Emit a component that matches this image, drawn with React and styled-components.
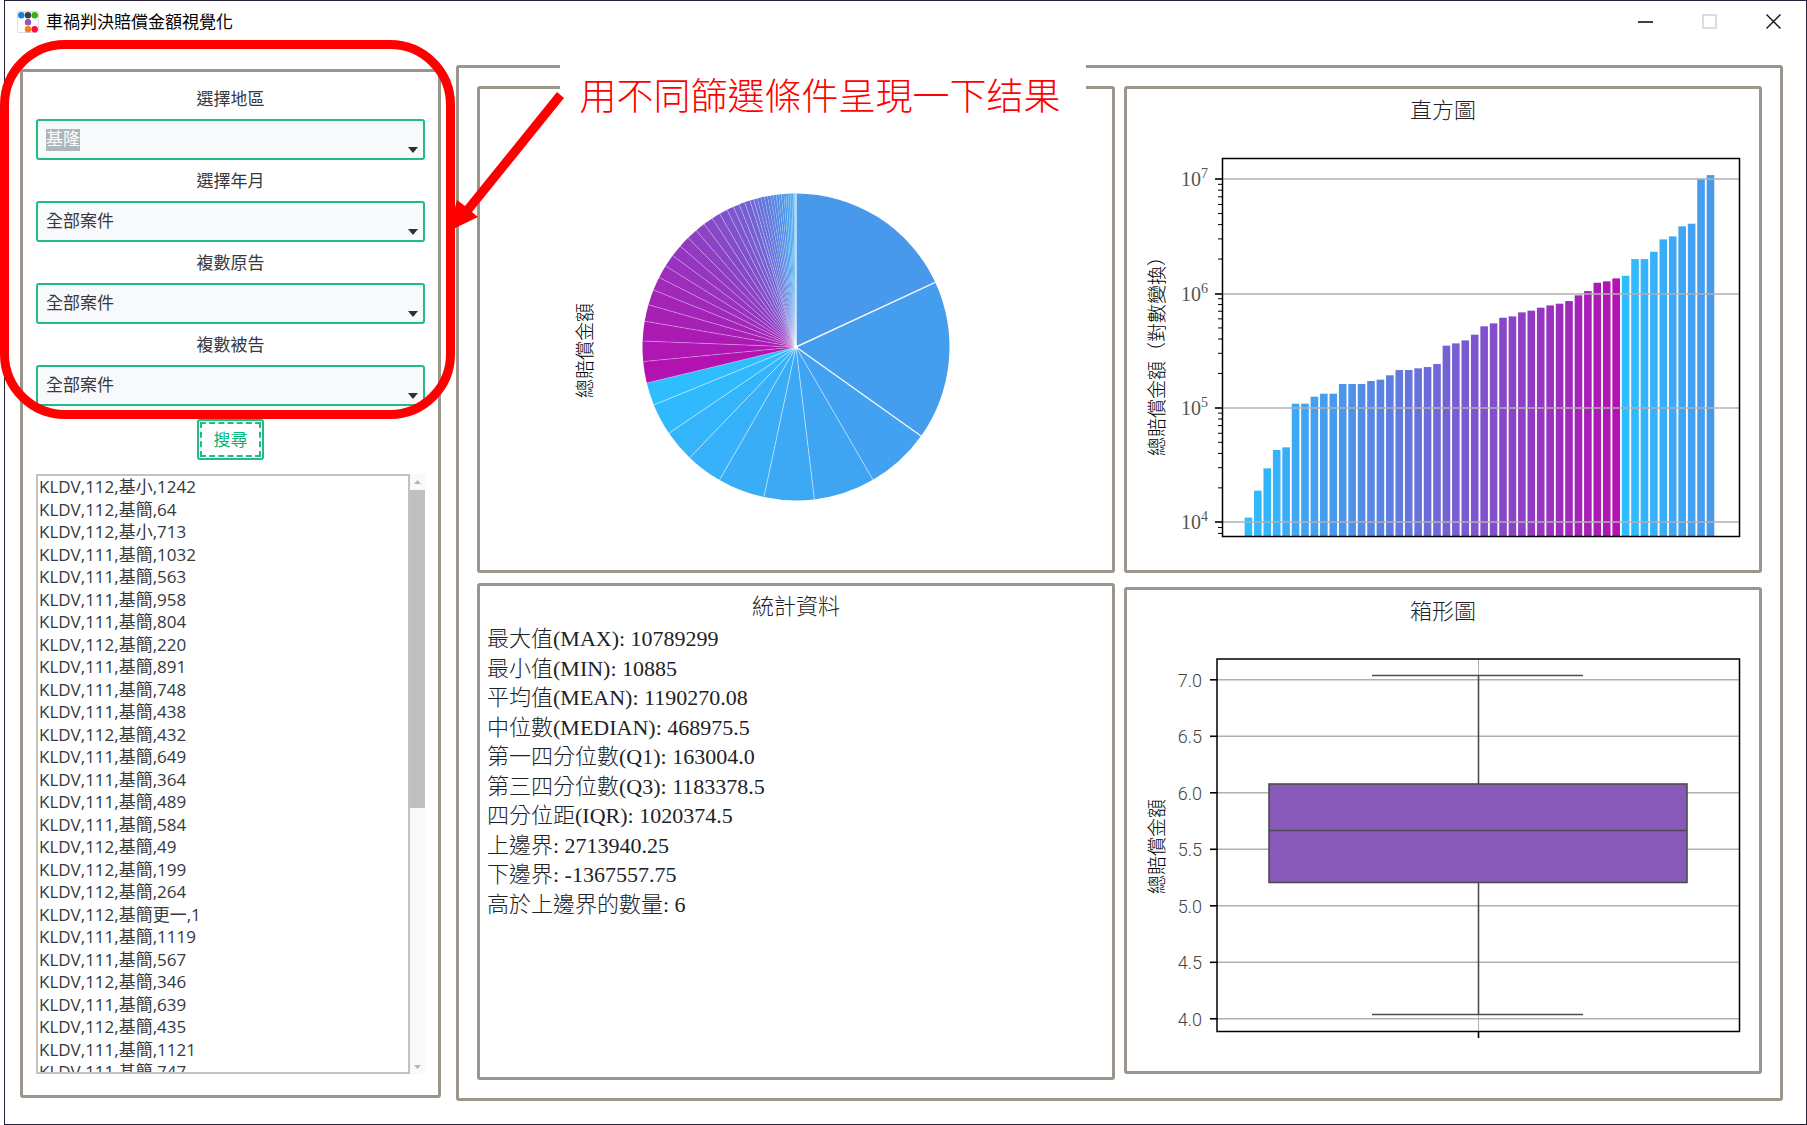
import React from "react";
import styled, { createGlobalStyle } from "styled-components";

const UI_FONT = '"Open Sans", "Noto Sans CJK TC", sans-serif';
const PLOT_FONT = '"Liberation Serif", "Noto Sans CJK TC", serif';
const GREEN = "#1fbc83";
const LINE = "#9b958b";

const GlobalStyle = createGlobalStyle`
  *, *::before, *::after { box-sizing: border-box; }
  body { margin: 0; background: #fff; color: #343a40; font-family: ${UI_FONT}; }
`;

const Screen = styled.div`
  position: relative;
  display: flex;
  height: 100vh;
  padding-left: 4px;
  overflow: hidden;
`;

const AppWindow = styled.div`
  flex: 1;
  min-width: 0;
  display: flex;
  flex-direction: column;
  border: 1px solid #25213a;
  background: #fff;
`;

const TitleBar = styled.header`
  display: flex;
  align-items: center;
  height: 41px;
  padding: 0 1px 0 12px;
`;

const AppTitle = styled.h1`
  flex: 1;
  margin: 0 0 0 7px;
  font-size: 17px;
  line-height: 24px;
  font-weight: 400;
  color: #000;
`;

const WindowButton = styled.button`
  display: grid;
  place-items: center;
  width: 64px;
  height: 40px;
  padding: 0;
  border: 0;
  background: none;
`;

const Body = styled.main`
  flex: 1;
  min-height: 0;
  display: grid;
  grid-template-columns: 421px minmax(0, 1fr);
  gap: 15px;
  padding: 23px 23px 23px 15px;
`;

const Frame = styled.section`
  min-width: 0;
  min-height: 0;
  display: flex;
  flex-direction: column;
  border: 3px solid ${LINE};
  border-radius: 3px;
`;

const Sidebar = styled(Frame)`
  margin: 4px 0 3px;
  padding: 7px 13px 21px;
`;

const FieldLabel = styled.label`
  font-size: 17px;
  line-height: 40px;
  text-align: center;
`;

const SelectWrap = styled.div`
  position: relative;
  height: 42px;
`;

const Select = styled.select`
  appearance: none;
  width: 100%;
  height: 41px;
  padding: 0 32px 2px 8px;
  border: 2px solid ${GREEN};
  border-radius: 3px;
  background-color: #f8f9fb;
  background-image: ${(p) => (p.$selected ? "linear-gradient(#adb5bd, #adb5bd)" : "none")};
  background-size: 34px 22px;
  background-position: 8px 8px;
  background-repeat: no-repeat;
  color: ${(p) => (p.$selected ? "#fff" : "#343a40")};
  font-family: ${UI_FONT};
  font-size: 17px;
`;

const Caret = styled.svg`
  position: absolute;
  right: 7px;
  bottom: 8px;
  pointer-events: none;
`;

const SearchButton = styled.button`
  align-self: center;
  flex: none;
  width: 67px;
  height: 41px;
  margin: 12px 0 14px;
  padding: 0 0 2px;
  border: 2px solid ${GREEN};
  border-radius: 3px;
  outline: 2px dashed ${GREEN};
  outline-offset: -5px;
  background: #fff;
  color: #02b875;
  font-family: ${UI_FONT};
  font-size: 17px;
`;

const ListArea = styled.div`
  flex: 1 1 0;
  min-height: 0;
  display: flex;
`;

const ListBox = styled.div`
  flex: 1;
  border: 2px solid #c2c2c2;
  overflow: hidden;
`;

const CaseList = styled.ul`
  display: grid;
  grid-auto-rows: 1fr;
  height: 608px;
  margin: 0;
  padding: 0 0 0 1px;
  list-style: none;
  font-size: 17px;
  line-height: 22px;
  white-space: nowrap;
`;

const ScrollTrack = styled.div`
  display: flex;
  flex-direction: column;
  align-items: center;
  width: 15px;
  background: #f8f9fb;
`;

const ScrollThumb = styled.div`
  width: 15px;
  height: 53%;
  background: #c0c0c0;
`;

const ScrollArrow = styled.svg`
  flex: none;
  margin: ${(p) => (p.$end ? "auto 0 0" : "0")};
`;

const Results = styled(Frame)`
  display: grid;
  grid-template-columns: repeat(2, minmax(0, 1fr));
  gap: 9px;
  padding: 18px;
`;

const Column = styled.div`
  min-height: 0;
  display: grid;
  grid-template-rows: ${(p) => p.$rows};
  gap: ${(p) => p.$gap}px;
  padding-bottom: ${(p) => p.$bottom}px;
`;

const PanelTitle = styled.h2`
  margin: 0;
  padding-top: ${(p) => (p.$tight ? 4 : 0)}px;
  font-family: ${PLOT_FONT};
  font-size: 22px;
  line-height: ${(p) => (p.$tight ? 34 : 44)}px;
  font-weight: 300;
  color: #1d2226;
  text-align: center;
`;

const Chart = styled.svg`
  flex: 1;
  min-height: 0;
  width: 100%;
  font-family: ${PLOT_FONT};
  font-weight: 300;
`;

const StatList = styled.ul`
  display: grid;
  grid-auto-rows: 1fr;
  height: 295px;
  margin: 0;
  padding: 0 7px;
  list-style: none;
  font-family: ${PLOT_FONT};
  font-size: 22px;
  line-height: 29px;
  font-weight: 300;
  color: #1d2226;
`;

const HighlightRing = styled.div`
  position: absolute;
  left: 0;
  top: 40px;
  width: 455px;
  height: 379px;
  border: 9px solid #f00;
  border-radius: 65px;
  pointer-events: none;
`;

const NoteText = styled.p`
  position: absolute;
  left: 560px;
  top: 60px;
  width: 526px;
  margin: 0;
  padding-right: 6px;
  background: #fff;
  color: #f00;
  font-family: "Noto Sans CJK TC", sans-serif;
  font-size: 37px;
  line-height: 68px;
  font-weight: 300;
  text-align: center;
  white-space: nowrap;
`;

const NoteArrow = styled.svg`
  position: absolute;
  left: 445px;
  top: 88px;
  pointer-events: none;
`;

const fields = [
  { id: "area", label: "選擇地區", value: "基隆", selected: true },
  { id: "month", label: "選擇年月", value: "全部案件" },
  { id: "plaintiffs", label: "複數原告", value: "全部案件" },
  { id: "defendants", label: "複數被告", value: "全部案件" },
];

const cases = [
  "KLDV,112,基小,1242", "KLDV,112,基簡,64", "KLDV,112,基小,713", "KLDV,111,基簡,1032",
  "KLDV,111,基簡,563", "KLDV,111,基簡,958", "KLDV,111,基簡,804", "KLDV,112,基簡,220",
  "KLDV,111,基簡,891", "KLDV,111,基簡,748", "KLDV,111,基簡,438", "KLDV,112,基簡,432",
  "KLDV,111,基簡,649", "KLDV,111,基簡,364", "KLDV,111,基簡,489", "KLDV,111,基簡,584",
  "KLDV,112,基簡,49", "KLDV,112,基簡,199", "KLDV,112,基簡,264", "KLDV,112,基簡更一,1",
  "KLDV,111,基簡,1119", "KLDV,111,基簡,567", "KLDV,112,基簡,346", "KLDV,111,基簡,639",
  "KLDV,112,基簡,435", "KLDV,111,基簡,1121", "KLDV,111,基簡,747",
];

const stats = [
  "最大值(MAX): 10789299",
  "最小值(MIN): 10885",
  "平均值(MEAN): 1190270.08",
  "中位數(MEDIAN): 468975.5",
  "第一四分位數(Q1): 163004.0",
  "第三四分位數(Q3): 1183378.5",
  "四分位距(IQR): 1020374.5",
  "上邊界: 2713940.25",
  "下邊界: -1367557.75",
  "高於上邊界的數量: 6",
];

// log10 of each compensation amount, ascending
const logs = [
  4.041, 4.277, 4.472, 4.632, 4.655, 5.037, 5.037, 5.098, 5.124, 5.124,
  5.209, 5.209, 5.209, 5.235, 5.247, 5.285, 5.331, 5.331, 5.346, 5.357,
  5.384, 5.544, 5.564, 5.59, 5.64, 5.713, 5.739, 5.788, 5.8, 5.835,
  5.85, 5.876, 5.896, 5.911, 5.934, 5.984, 6.021, 6.094, 6.106, 6.132,
  6.155, 6.301, 6.301, 6.365, 6.473, 6.499, 6.587, 6.61, 7.002, 7.035,
];

const mix = (a, b, t) => `rgb(${a.map((v, i) => Math.round(v + (b[i] - v) * t)).join(",")})`;
const CYAN = [46, 189, 255];
const BLUE = [75, 149, 234];
const MAGENTA = [178, 18, 176];

// The palette has 40 steps and starts over after the last one
function colorAt(i) {
  const k = i % 40;
  return k < 10 ? mix(CYAN, BLUE, k / 10) : mix(BLUE, MAGENTA, (k - 10) / 29);
}

function YLabel({ x, y, children }) {
  return (
    <text transform={`translate(${x} ${y}) rotate(-90)`} fontSize="19" fill="#000" dominantBaseline="central">
      {children}
    </text>
  );
}

function PieChart() {
  const cx = 316;
  const cy = 258;
  const r = 153.5;
  const values = logs.map((l, i) => ({ v: 10 ** l, color: colorAt(i) })).reverse();
  const total = values.reduce((s, d) => s + d.v, 0);
  const at = (a) => [cx + r * Math.sin(a), cy - r * Math.cos(a)];
  let angle = 0;
  const slices = values.map((d) => {
    const start = angle;
    angle += (d.v / total) * Math.PI * 2;
    return { color: d.color, from: at(start), to: at(angle) };
  });
  return (
    <Chart viewBox="0 0 632 481" role="img" aria-label="總賠償金額">
      <YLabel x={105} y={309}>總賠償金額</YLabel>
      {slices.map((s, i) => (
        <path key={i} fill={s.color} d={`M${cx} ${cy}L${s.from}A${r} ${r} 0 0 1 ${s.to}Z`} />
      ))}
      {slices.map((s, i) => (
        <line key={i} x1={cx} y1={cy} x2={s.to[0]} y2={s.to[1]} stroke="#fff"
          strokeWidth={i < 2 ? 1.5 : 1} opacity={i < 2 ? 0.9 : i < 9 ? 0.5 : i < 30 ? 0.3 : 0.18} />
      ))}
      <line x1={cx + 0.5} y1={cy} x2={cx + 0.5} y2={cy - r} stroke="#fff" opacity="0.5" />
      <circle cx={cx} cy={cy} r="2" fill="#fff" />
    </Chart>
  );
}

function Histogram() {
  const y = (l) => 389.3 - (l - 4) * 114.4;
  const minor = [];
  for (let d = 3; d < 7; d++) {
    for (let m = 2; m < 10; m++) {
      const l = d + Math.log10(m);
      if (l > 3.88) minor.push(l);
    }
  }
  return (
    <Chart viewBox="0 0 632 437" role="img" aria-label="直方圖">
      <YLabel x={30} y={323}>總賠償金額（對數變換）</YLabel>
      {logs.map((l, i) => (
        <rect key={i} x={117.6 + i * 9.43} y={y(l)} width="7.6" height={403.5 - y(l)} fill={colorAt(i)} />
      ))}
      {[4, 5, 6, 7].map((p) => (
        <g key={p}>
          <line x1="96" x2="612" y1={Math.round(y(p))} y2={Math.round(y(p))} stroke="#b0b0b0" strokeWidth="1.6" />
          <line x1="88" x2="95" y1={Math.round(y(p))} y2={Math.round(y(p))} stroke="#000" strokeWidth="1.6" />
          <text x="54" y={y(p) + 7} fontSize="20" fill="#555">
            10<tspan fontSize="14" dy="-8">{p}</tspan>
          </text>
        </g>
      ))}
      {minor.map((l) => (
        <line key={l} x1="91" x2="95" y1={y(l)} y2={y(l)} stroke="#000" />
      ))}
      <rect x="95.5" y="25.5" width="517" height="378" fill="none" stroke="#000" strokeWidth="1.5" />
    </Chart>
  );
}

function BoxPlot() {
  const y = (v) => 384.8 - (v - 4) * 113;
  return (
    <Chart viewBox="0 0 632 437" role="img" aria-label="箱形圖">
      <YLabel x={30} y={260}>總賠償金額</YLabel>
      <line x1="351.5" x2="351.5" y1="25" y2="397" stroke="#b0b0b0" />
      {["7.0", "6.5", "6.0", "5.5", "5.0", "4.5", "4.0"].map((t) => (
        <g key={t}>
          <line x1="90" x2="612" y1={y(+t)} y2={y(+t)} stroke="#b0b0b0" strokeWidth="1.5" />
          <line x1="83" x2="90" y1={y(+t)} y2={y(+t)} stroke="#000" strokeWidth="1.6" />
          <text x="75" y={y(+t) + 7} fontSize="18" fill="#444" textAnchor="end"
            fontFamily="Roboto, sans-serif">{t}</text>
        </g>
      ))}
      <g stroke="#4d4d4d" strokeWidth="1.6">
        <line x1="351.5" x2="351.5" y1="41.5" y2="150" />
        <line x1="351.5" x2="351.5" y1="249" y2="380" />
        <line x1="245" x2="456" y1="41.5" y2="41.5" />
        <line x1="245" x2="456" y1="380.5" y2="380.5" />
        <rect x="142" y="150" width="418" height="98.5" fill="#8859b8" />
        <line x1="142" x2="560" y1="196.5" y2="196.5" />
      </g>
      <rect x="90" y="25" width="522.5" height="372.5" fill="none" stroke="#000" strokeWidth="1.5" />
      <line x1="351.5" x2="351.5" y1="397" y2="404" stroke="#000" strokeWidth="1.6" />
    </Chart>
  );
}

function AppIcon() {
  const dots = [
    [4.3, 4.3, "#1c7fe0"], [11, 4.3, "#3a3f44"], [17.7, 4.3, "#35b00f"],
    [11, 11.3, "#9255bf"], [11, 18.3, "#ff7a12"], [17.7, 18.3, "#ff0a3c"],
  ];
  return (
    <svg width="22" height="22" aria-hidden="true">
      <rect x="0.5" y="0.5" width="21" height="21" rx="1" fill="#fff" stroke="#ddd" />
      {dots.map(([x, y, c]) => <circle key={c} cx={x} cy={y} r="3.2" fill={c} />)}
    </svg>
  );
}

export default function App() {
  return (
    <Screen>
      <GlobalStyle />
      <AppWindow>
        <TitleBar>
          <AppIcon />
          <AppTitle>車禍判決賠償金額視覺化</AppTitle>
          <WindowButton type="button" aria-label="最小化">
            <svg width="15" height="15"><path d="M0 8H15" stroke="#111" strokeWidth="1.6" /></svg>
          </WindowButton>
          <WindowButton type="button" aria-label="最大化" disabled>
            <svg width="15" height="15"><rect x="1" y="1" width="13" height="13" fill="none" stroke="#ccc" strokeWidth="1.3" /></svg>
          </WindowButton>
          <WindowButton type="button" aria-label="關閉">
            <svg width="15" height="15"><path d="M0.5 0.5L14.5 14.5M14.5 0.5L0.5 14.5" stroke="#111" strokeWidth="1.4" /></svg>
          </WindowButton>
        </TitleBar>
        <Body>
          <Sidebar>
            {fields.map((f) => (
              <React.Fragment key={f.id}>
                <FieldLabel htmlFor={f.id}>{f.label}</FieldLabel>
                <SelectWrap>
                  <Select id={f.id} $selected={f.selected} defaultValue={f.value}>
                    <option>{f.value}</option>
                  </Select>
                  <Caret width="10" height="6" aria-hidden="true"><path d="M0 0H10L5 6Z" fill="#2b3035" /></Caret>
                </SelectWrap>
              </React.Fragment>
            ))}
            <SearchButton type="button">搜尋</SearchButton>
            <ListArea>
              <ListBox>
                <CaseList>{cases.map((c) => <li key={c}>{c}</li>)}</CaseList>
              </ListBox>
              <ScrollTrack>
                <ScrollArrow width="15" height="16" aria-hidden="true"><path d="M4 10H11L7.5 6Z" fill="#b5b5b5" /></ScrollArrow>
                <ScrollThumb />
                <ScrollArrow $end width="15" height="16" aria-hidden="true"><path d="M4 7H11L7.5 11Z" fill="#b5b5b5" /></ScrollArrow>
              </ScrollTrack>
            </ListArea>
          </Sidebar>
          <Results>
            <Column $rows="minmax(0, 487fr) minmax(0, 497fr)" $gap={10} $bottom={0}>
              <Frame><PieChart /></Frame>
              <Frame>
                <PanelTitle $tight>統計資料</PanelTitle>
                <StatList>{stats.map((s) => <li key={s}>{s}</li>)}</StatList>
              </Frame>
            </Column>
            <Column $rows="repeat(2, minmax(0, 1fr))" $gap={14} $bottom={6}>
              <Frame>
                <PanelTitle>直方圖</PanelTitle>
                <Histogram />
              </Frame>
              <Frame>
                <PanelTitle>箱形圖</PanelTitle>
                <BoxPlot />
              </Frame>
            </Column>
          </Results>
        </Body>
      </AppWindow>
      <HighlightRing />
      <NoteText>用不同篩選條件呈現一下结果</NoteText>
      <NoteArrow width="122" height="146" aria-hidden="true">
        <path d="M112 4L119 10L27 124L33 129L4 143L12 112L20 118Z" fill="#f00" />
      </NoteArrow>
    </Screen>
  );
}
